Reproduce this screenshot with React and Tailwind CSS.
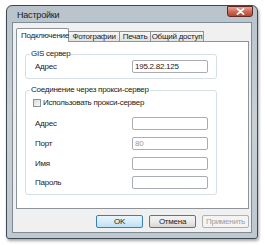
import React from "react";

function Field({ label, value, disabled, className = "" }) {
  return (
    <div className={"flex items-center h-[13px] " + className}>
      <span className="pl-[9px] w-[106px] text-[#222]">{label}</span>
      <div className="w-[76px] h-[13px] border border-[#a9acb1] rounded-[2px] bg-white flex items-center pl-[2px]">
        <span className={disabled ? "text-[#9a9a9a]" : "text-[#222]"}>{value}</span>
      </div>
    </div>
  );
}

function Tab({ children, active, w }) {
  if (active) {
    return (
      <div
        className={`${w} h-[14px] -mb-px bg-white border border-b-0 border-[#8c9399] rounded-t-[2px] flex items-center pl-[4px] z-10 relative text-[#222] whitespace-nowrap`}
      >
        {children}
      </div>
    );
  }
  return (
    <div
      className={`${w} h-[10px] mt-[3px] bg-gradient-to-b from-[#f6f6f6] to-[#e2e2e2] border border-b-0 border-l-0 border-[#8c9399] flex items-center justify-center text-[#222] whitespace-nowrap`}
    >
      {children}
    </div>
  );
}

export default function App() {
  return (
    <div
      className="w-[265px] h-[245px] bg-white pl-[6px] pt-[5px] text-[8px] leading-[10px] tracking-[-0.25px]"
      style={{ fontFamily: '"Liberation Sans", Arial, sans-serif' }}
    >
      <div className="w-[252px] h-[234px] border border-[#3e4a52] rounded-t-[6px] rounded-b-[3px] bg-gradient-to-b from-[#b9c3cb] via-[#c8d0d6] to-[#bfc8cf] flex flex-col px-[5px] pb-[5px] shadow-[1px_2px_3px_rgba(0,0,0,0.35)]">
        <div className="h-[16px] flex items-start justify-between shrink-0">
          <span className="pl-[5px] pt-[4px] text-[9px] tracking-[-0.2px] text-[#1a1a1a]">Настройки</span>
          <div className="w-[26px] h-[11px] mr-[-1px] rounded-b-[3px] border border-[#5d2a24] bg-gradient-to-b from-[#e3a596] via-[#cf6b57] to-[#b8442f] flex items-center justify-center">
            <svg width="9" height="7" viewBox="0 0 9 7">
              <path d="M1.5 0.8 L7.5 6.2 M7.5 0.8 L1.5 6.2" stroke="#fff" strokeWidth="1.8" strokeLinecap="round" />
            </svg>
          </div>
        </div>
        <div className="flex-1 border border-[#7f8b95] bg-[#f0f0f0] flex flex-col pl-[3px] pr-[2px] pt-[5px]">
          <div className="flex items-end h-[13px] shrink-0">
            <Tab active w="w-[53px]">Подключение</Tab>
            <Tab w="w-[51px]">Фотографии</Tab>
            <Tab w="w-[31px]">Печать</Tab>
            <Tab w="w-[53px]">Общий доступ</Tab>
          </div>
          <div className="h-[168px] w-[233px] bg-white border border-[#8c9399] flex flex-col pl-[8px] shrink-0">
            <fieldset className="mt-[7px] w-[192px] border border-[#d5dfe5] rounded-[3px] pb-[5px] pt-[1px]">
              <legend className="ml-[4px] px-[1px] text-[#222]">GIS сервер</legend>
              <Field label="Адрес" value="195.2.82.125" />
            </fieldset>
            <fieldset className="mt-[6px] w-[192px] border border-[#d5dfe5] rounded-[3px] pb-[5px]">
              <legend className="ml-[4px] px-[1px] text-[#222]">Соединение через прокси-сервер</legend>
              <div className="flex items-center h-[10px] mt-[3px] pl-[7px]">
                <div className="w-[8px] h-[8px] border border-[#8e8f8f] bg-gradient-to-br from-[#dcdcdc] to-[#f7f7f7] shrink-0" />
                <span className="ml-[2px] text-[#222]">Использовать прокси-сервер</span>
              </div>
              <Field className="mt-[9px]" label="Адрес" value="" />
              <Field className="mt-[7px]" label="Порт" value="80" disabled />
              <Field className="mt-[7px]" label="Имя" value="" />
              <Field className="mt-[6px]" label="Пароль" value="" />
            </fieldset>
          </div>
          <div className="flex justify-end gap-[6px] mt-[6px]">
            <div className="w-[47px] h-[13px] rounded-[2px] border border-[#3c7fb1] bg-gradient-to-b from-[#e9f5fc] via-[#d7ecf9] to-[#bde0f5] flex items-center justify-center text-[#222]">
              OK
            </div>
            <div className="w-[47px] h-[13px] rounded-[2px] border border-[#707070] bg-gradient-to-b from-[#f2f2f2] via-[#ebebeb] to-[#d6d6d6] flex items-center justify-center text-[#222]">
              Отмена
            </div>
            <div className="w-[47px] h-[13px] rounded-[2px] border border-[#adb2b5] bg-[#f4f4f4] flex items-center justify-center text-[#a0a0a0]">
              Применить
            </div>
          </div>
        </div>
      </div>
    </div>
  );
}
